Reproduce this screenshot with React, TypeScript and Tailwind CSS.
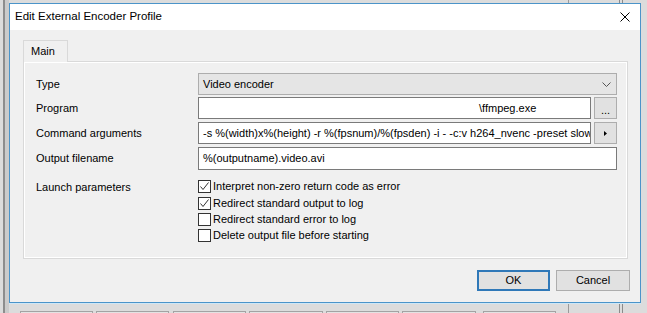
import { ReactNode } from "react";

const desktopTabs = [
  [20, 73],
  [96, 73],
  [173, 73],
  [249, 74],
  [326, 73],
  [402, 74],
  [483, 73],
];

function Backdrop() {
  return (
    <>
      <div className="absolute left-[3px] top-0 h-full w-[2px] bg-[#8d8d8d]" />
      <div className="absolute left-[5px] top-0 h-full w-[4px] bg-[#cbcbcb]" />
      <div className="absolute left-[568px] top-0 h-full w-px bg-[#9a9a9a]" />
      <div className="absolute left-[619px] top-0 h-full w-px bg-[#8a8a8a]" />
      <div className="absolute left-[622px] top-0 h-full w-px bg-[#8a8a8a]" />
      {desktopTabs.map(([x, w]) => (
        <div
          key={x}
          className="absolute top-[311px] h-[10px] border border-[#a3a3a3] bg-[#e3e3e3]"
          style={{ left: x, width: w }}
        />
      ))}
    </>
  );
}

function Checkbox({ checked, label }: { checked?: boolean; label: string }) {
  return (
    <div className="flex h-[16px] items-start">
      <div className="mt-px flex h-[13px] w-[13px] shrink-0 items-center justify-center border border-[#333] bg-white">
        {checked && (
          <svg width="11" height="11" viewBox="0 0 11 11" fill="none">
            <path d="M1.5 5.5 L4 8.5 L9.5 1.5" stroke="#333" strokeWidth="1" />
          </svg>
        )}
      </div>
      <span className="ml-[2px] leading-[15px]">{label}</span>
    </div>
  );
}

function Row({ label, top, children }: { label: string; top: string; children: ReactNode }) {
  return (
    <div className={`flex items-center ${top}`}>
      <div className="w-[162px] shrink-0">{label}</div>
      {children}
    </div>
  );
}

export default function App() {
  return (
    <div className="relative h-[313px] w-[647px] overflow-hidden bg-[#dcdcdc] font-['Liberation_Sans',Arial,sans-serif] text-[11px] text-black">
      <Backdrop />

      <div className="relative ml-[9px] mt-[3px] flex h-[300px] w-[632px] flex-col border border-[#4b94c9] bg-[#f0f0f0] shadow-[0_1px_0_#cfe7f6]">
        <div className="flex h-[26px] items-center justify-between bg-white pl-[5px] pr-[10px]">
          <span className="text-[11.5px]">Edit External Encoder Profile</span>
          <svg width="10" height="10" viewBox="0 0 10 10">
            <path d="M0.5 0.5 L9.5 9.5 M9.5 0.5 L0.5 9.5" stroke="#000" strokeWidth="1" />
          </svg>
        </div>

        <div className="flex flex-1 flex-col pl-[13px] pt-[10px]">
          <div className="relative z-10 -mb-px flex h-[22px] w-[45px] items-center border border-b-0 border-[#d9d9d9] bg-[#f0f0f0] pl-[7px]">
            Main
          </div>
          <div className="flex h-[198px] w-[605px] flex-col border border-[#d9d9d9] pl-[12px] pt-[11px] shadow-[inset_1px_1px_0_#fff,inset_-1px_-1px_0_#fff]">
            <Row label="Type" top="">
              <div className="flex h-[22px] w-[419px] items-center justify-between border border-[#adadad] bg-[#e5e5e5] pl-[4px] pr-[5px]">
                <span>Video encoder</span>
                <svg width="9" height="5" viewBox="0 0 9 5" fill="none">
                  <path d="M0.5 0.5 L4.5 4.5 L8.5 0.5" stroke="#555" strokeWidth="1" />
                </svg>
              </div>
            </Row>

            <Row label="Program" top="mt-[2px]">
              <div className="flex h-[22px] w-[393px] items-center border border-[#7a7a7a] bg-white pl-[280px]">
                \ffmpeg.exe
              </div>
              <div className="ml-[3px] flex h-[22px] w-[23px] items-end justify-center border border-[#adadad] bg-[#e1e1e1] pb-[3px] leading-[10px]">
                ...
              </div>
            </Row>

            <Row label="Command arguments" top="mt-[3px]">
              <div className="flex h-[22px] w-[393px] items-center overflow-hidden whitespace-nowrap border border-[#7a7a7a] bg-white pl-[4px]">
                -s %(width)x%(height) -r %(fpsnum)/%(fpsden) -i - -c:v h264_nvenc -preset slow
              </div>
              <div className="ml-[3px] flex h-[22px] w-[23px] items-center justify-center border border-[#adadad] bg-[#e1e1e1]">
                <svg width="3" height="5" viewBox="0 0 3 5">
                  <path d="M0 0 L3 2.5 L0 5 Z" fill="#000" />
                </svg>
              </div>
            </Row>

            <Row label="Output filename" top="mt-[3px]">
              <div className="flex h-[23px] w-[419px] items-center border border-[#7a7a7a] bg-white pl-[4px]">
                %(outputname).video.avi
              </div>
            </Row>

            <div className="mt-[9px] flex">
              <div className="w-[162px] shrink-0 pt-[1px] leading-[15px]">Launch parameters</div>
              <div className="flex flex-col">
                <div className="h-[17px]">
                  <Checkbox checked label="Interpret non-zero return code as error" />
                </div>
                <Checkbox checked label="Redirect standard output to log" />
                <Checkbox label="Redirect standard error to log" />
                <Checkbox label="Delete output file before starting" />
              </div>
            </div>
          </div>

          <div className="mt-[11px] flex justify-end gap-[6px] pr-[10px]">
            <button className="flex h-[21px] w-[73px] items-center justify-center border-2 border-[#2f78b8] bg-[#e1e1e1]">
              OK
            </button>
            <button className="flex h-[21px] w-[74px] items-center justify-center border border-[#adadad] bg-[#e1e1e1]">
              Cancel
            </button>
          </div>
        </div>
      </div>
    </div>
  );
}
